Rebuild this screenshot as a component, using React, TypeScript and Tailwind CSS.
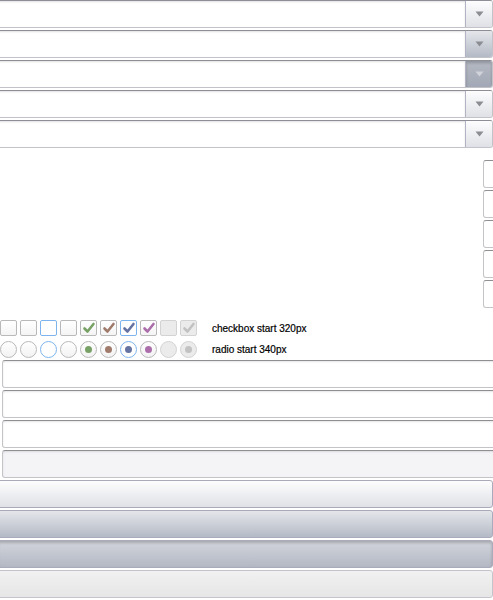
import React from 'react';

type Tone = 'normal' | 'hover' | 'active';

const btnTone: Record<Tone, string> = {
  normal: 'bg-gradient-to-b from-[#fdfdfe] to-[#dfe1e6]',
  hover: 'bg-gradient-to-b from-[#e4e6ea] to-[#b4bac6]',
  active: 'bg-gradient-to-b from-[#d2d5dc] to-[#b3b8c4] shadow-[inset_0_2px_3px_rgba(0,0,0,0.2)]',
};

const selTone: Record<Tone, string> = {
  normal: btnTone.normal,
  hover: btnTone.hover,
  active: 'bg-gradient-to-b from-[#b4b9c3] to-[#a2a8b5] shadow-[inset_0_2px_3px_rgba(0,0,0,0.2)]',
};

const Arrow = ({ light }: { light?: boolean }) => (
  <svg width="9" height="6" viewBox="0 0 9 6">
    <path d="M0.5 0.5 L8.5 0.5 L4.5 5.5 Z" fill={light ? '#d0d3d9' : '#8b8d93'} />
  </svg>
);

const Select = ({ tone }: { tone: Tone }) => (
  <div className="-ml-[3px] w-[496px] h-[28px] flex rounded-[3px] border border-[#c2c3c9] border-t-[#8e8f96] bg-white overflow-hidden">
    <div className="flex-1 shadow-[inset_0_1px_2px_rgba(0,0,0,0.12)]" />
    <div className={`w-[27px] flex items-center justify-center border-l border-[#b2b4c4] ${selTone[tone]}`}>
      <Arrow light={tone === 'active'} />
    </div>
  </div>
);

const Check = ({ color }: { color: string }) => (
  <svg width="14" height="14" viewBox="0 0 14 14">
    <path d="M2.5 7.5 L5.5 10.5 L11.5 3" fill="none" stroke={color} strokeWidth="2.6" strokeLinecap="round" strokeLinejoin="round" />
  </svg>
);

type Mark = { focus?: boolean; disabled?: boolean; color?: string };

const marks: Mark[] = [
  {},
  {},
  { focus: true },
  {},
  { color: '#78a166' },
  { color: '#a07a6b' },
  { color: '#6573a3', focus: true },
  { color: '#ab6eab' },
  { disabled: true },
  { disabled: true, color: '#c2c2c2' },
];

const Checkbox = ({ m }: { m: Mark }) => (
  <div
    className={`w-[17px] h-[16px] rounded-[2px] border flex items-center justify-center ${
      m.disabled
        ? 'bg-[#ebebeb] border-[#d3d3d3]'
        : m.focus
        ? 'bg-white border-[#7db4ee]'
        : 'bg-gradient-to-b from-white to-[#f4f4f4] border-[#b9b9b9]'
    }`}
  >
    {m.color && <Check color={m.color} />}
  </div>
);

const Radio = ({ m }: { m: Mark }) => (
  <div
    className={`w-[17px] h-[17px] rounded-full border flex items-center justify-center ${
      m.disabled
        ? 'bg-[#ebebeb] border-[#d3d3d3]'
        : m.focus
        ? 'bg-white border-[#7db4ee]'
        : 'bg-gradient-to-b from-white to-[#f2f2f2] border-[#b9b9b9]'
    }`}
  >
    {m.color && <div className="w-[7px] h-[7px] rounded-full" style={{ backgroundColor: m.color }} />}
  </div>
);

const Field = ({ disabled }: { disabled?: boolean }) => (
  <div
    className={`ml-[2px] w-[520px] h-[28px] rounded-[3px] border border-[#c4c4c8] border-t-[#8f8f93] shadow-[inset_0_1px_2px_rgba(0,0,0,0.1)] ${
      disabled ? 'bg-[#f4f4f6]' : 'bg-white'
    }`}
  />
);

const Button = ({ tone, disabled }: { tone: Tone; disabled?: boolean }) => (
  <div
    className={`-ml-[3px] w-[496px] h-[28px] rounded-[3px] border border-[#a9abbb] ${
      disabled ? 'bg-gradient-to-b from-[#f1f1f1] to-[#e6e6e6] border-[#c4c4cc]' : btnTone[tone]
    }`}
  />
);

export default function App() {
  return (
    <div className="w-[493px] h-[600px] overflow-hidden bg-white font-['Liberation_Sans',sans-serif]">
      <div className="flex flex-col gap-[2px]">
        <Select tone="normal" />
        <Select tone="hover" />
        <Select tone="active" />
        <Select tone="normal" />
        <Select tone="normal" />
      </div>

      <div className="mt-[12px] pl-[483px] flex flex-col gap-[2px]">
        {[0, 1, 2, 3, 4].map(i => (
          <div key={i} className="w-[30px] h-[28px] shrink-0 rounded-[3px] border border-[#c4c4c8] border-t-[#8f8f93] bg-white" />
        ))}
      </div>

      <div className="mt-[12px] flex items-center h-[16px]">
        <div className="flex gap-[3px]">
          {marks.map((m, i) => (
            <Checkbox key={i} m={m} />
          ))}
        </div>
        <span className="ml-[15px] text-[10px] text-black [-webkit-text-stroke:0.2px_black]">checkbox start 320px</span>
      </div>
      <div className="mt-[5px] flex items-center h-[17px]">
        <div className="flex gap-[3px]">
          {marks.map((m, i) => (
            <Radio key={i} m={m} />
          ))}
        </div>
        <span className="ml-[15px] text-[10px] text-black [-webkit-text-stroke:0.2px_black]">radio start 340px</span>
      </div>

      <div className="mt-[2px] flex flex-col gap-[2px]">
        <Field />
        <Field />
        <Field />
        <Field disabled />
      </div>

      <div className="mt-[2px] flex flex-col gap-[2px]">
        <Button tone="normal" />
        <Button tone="hover" />
        <Button tone="active" />
        <Button tone="normal" disabled />
      </div>
    </div>
  );
}
